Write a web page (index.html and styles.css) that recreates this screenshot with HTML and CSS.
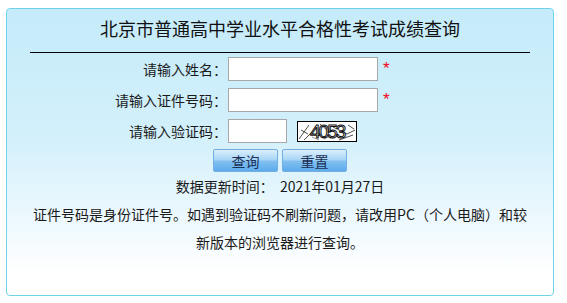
FILE: index.html
```html
<!DOCTYPE html>
<html lang="zh-CN">
<head>
  <meta charset="UTF-8">
  <title>北京市普通高中学业水平合格性考试成绩查询</title>
  <link rel="stylesheet" href="styles.css">
</head>
<body>
  <div class="query-box">
    <div class="query-title">北京市普通高中学业水平合格性考试成绩查询</div>
    <form class="query-form">
      <div class="form-row">
        <label class="row-label">请输入姓名：</label>
        <input type="text" class="txt-long">
        <span class="req">*</span>
      </div>
      <div class="form-row">
        <label class="row-label">请输入证件号码：</label>
        <input type="text" class="txt-long">
        <span class="req">*</span>
      </div>
      <div class="form-row">
        <label class="row-label">请输入验证码：</label>
        <input type="text" class="txt-short">
        <span class="captcha">
          <svg width="58" height="19" viewBox="0 0 58 19">
            <rect width="58" height="19" fill="#fff"/>
            <text x="12" y="16" font-family="Liberation Sans, sans-serif" font-size="19" fill="#fff" stroke="#111" stroke-width="1" letter-spacing="-2">4053</text>
            <path d="M1 17 L11 3 M6 18 L14 10 M3 8 L10 12 M22 2 L29 8 M35 5 L49 12 L57 8 M41 18 L55 13 M50 3 L56 7" stroke="#222" stroke-width="0.8" fill="none"/>
            <path d="M14 15 L21 18 M44 4 L47 9 M26 17 L33 14" stroke="#555" stroke-width="0.6" fill="none"/>
          </svg>
        </span>
      </div>
      <div class="btn-row">
        <button type="button" class="btn">查询</button>
        <button type="reset" class="btn">重置</button>
      </div>
    </form>
    <div class="notes">
      <p>数据更新时间：&nbsp; 2021年01月27日</p>
      <p>证件号码是身份证件号。如遇到验证码不刷新问题，请改用PC（个人电脑）和较新版本的浏览器进行查询。</p>
    </div>
  </div>
</body>
</html>
```

FILE: styles.css
```css
html, body {
  margin: 0;
  padding: 0;
  background: #fff;
  font-family: "Noto Sans CJK SC", "Liberation Sans", sans-serif;
  color: #1a1a1a;
}

.query-box {
  box-sizing: border-box;
  width: 548px;
  height: 288px;
  margin: 8px 0 0 6px;
  border: 1px solid #6fd4ea;
  border-radius: 4px;
  background: linear-gradient(to bottom, #c5ebfa 0%, #d3f0fb 45%, #eef9fe 75%, #fff 92%);
}

.query-title {
  margin: 0 23px;
  padding: 9px 0 14px;
  height: 20px;
  line-height: 20px;
  font-size: 18px;
  text-align: center;
  border-bottom: 1px solid #000;
  color: #111;
}

.query-form {
  margin: 0;
  padding-top: 4px;
}

.form-row {
  display: flex;
  align-items: center;
  height: 24px;
  margin-bottom: 7px;
}

.row-label {
  width: 220px;
  text-align: right;
  font-size: 14px;
  color: #1a1a1a;
}

.form-row input {
  box-sizing: border-box;
  height: 24px;
  margin: 0 0 0 1px;
  border: 1px solid #a8a8a8;
  background: #fff;
  padding: 2px 4px;
}

.txt-long {
  width: 150px;
}

.txt-short {
  width: 59px;
}

.req {
  margin-left: 5px;
  color: #f2061b;
  font-family: "Liberation Sans", sans-serif;
  font-size: 17px;
  align-self: flex-start;
  line-height: 17px;
  padding-top: 3px;
}

.captcha {
  display: flex;
  margin-left: 10px;
  border: 1px solid #000;
  background: #fff;
}

.btn-row {
  display: flex;
  justify-content: center;
  gap: 4px;
  margin-top: -1px;
}

.btn {
  box-sizing: border-box;
  width: 65px;
  height: 23px;
  padding: 0;
  border: 1px solid #72aee0;
  border-radius: 2px;
  background: linear-gradient(to bottom, #dbeffc 0%, #a9d6f6 45%, #7fbff0 55%, #5eaced 100%);
  font-family: inherit;
  font-size: 14px;
  line-height: 20px;
  color: #1c2f55;
  cursor: pointer;
}

.notes {
  padding: 0 20px;
  text-align: center;
  font-size: 14px;
}

.notes p {
  margin: 0;
  line-height: 28px;
}
```
